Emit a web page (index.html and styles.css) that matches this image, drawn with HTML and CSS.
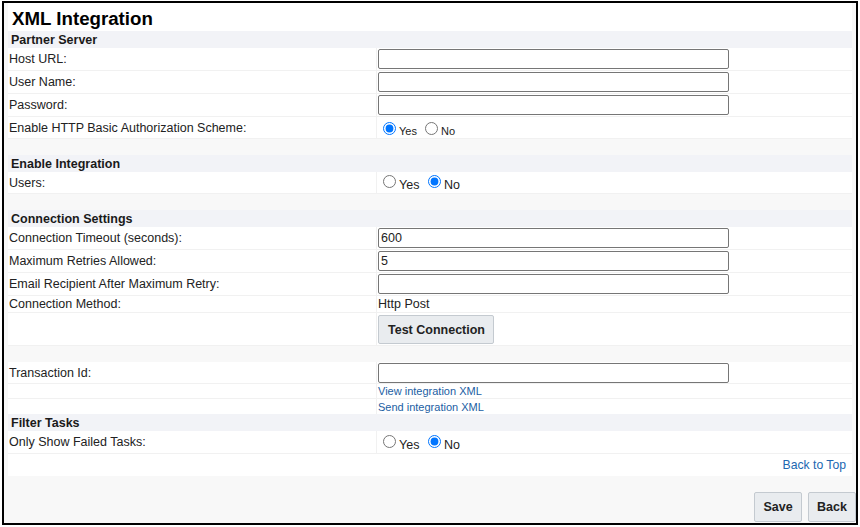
FILE: index.html
```html
<!DOCTYPE html>
<html>
<head>
<meta charset="utf-8">
<title>XML Integration</title>
<link rel="stylesheet" href="styles.css">
</head>
<body>
<div class="frame">
  <div class="content">
    <h1 class="title">XML Integration</h1>

    <div class="head">Partner Server</div>
    <div class="row"><div class="label">Host URL:</div><div class="value"><input class="text" type="text"></div></div>
    <div class="row"><div class="label">User Name:</div><div class="value"><input class="text" type="text"></div></div>
    <div class="row"><div class="label">Password:</div><div class="value"><input class="text" type="password"></div></div>
    <div class="row r22"><div class="label">Enable HTTP Basic Authorization Scheme:</div>
      <div class="value"><span class="radios small"><input type="radio" name="auth" checked><span class="opt">Yes</span> <input type="radio" name="auth"><span class="opt">No</span></span></div></div>

    <div class="gap"></div>

    <div class="head">Enable Integration</div>
    <div class="row r22"><div class="label">Users:</div>
      <div class="value"><span class="radios"><input type="radio" name="users"><span class="opt">Yes</span> <input type="radio" name="users" checked><span class="opt">No</span></span></div></div>

    <div class="gap"></div>

    <div class="head">Connection Settings</div>
    <div class="row"><div class="label">Connection Timeout (seconds):</div><div class="value"><input class="text" type="text" value="600"></div></div>
    <div class="row"><div class="label">Maximum Retries Allowed:</div><div class="value"><input class="text" type="text" value="5"></div></div>
    <div class="row"><div class="label">Email Recipient After Maximum Retry:</div><div class="value"><input class="text" type="text"></div></div>
    <div class="row r17"><div class="label">Connection Method:</div><div class="value">Http Post</div></div>
    <div class="row r33"><div class="label"></div><div class="value top"><button class="btn test">Test Connection</button></div></div>

    <div class="gap"></div>

    <div class="row r22"><div class="label">Transaction Id:</div><div class="value"><input class="text" type="text"></div></div>
    <div class="row r15"><div class="label"></div><div class="value"><a class="link" href="#">View integration XML</a></div></div>
    <div class="row r15 last"><div class="label"></div><div class="value"><a class="link" href="#">Send integration XML</a></div></div>

    <div class="head">Filter Tasks</div>
    <div class="row"><div class="label">Only Show Failed Tasks:</div>
      <div class="value"><span class="radios"><input type="radio" name="failed"><span class="opt">Yes</span> <input type="radio" name="failed" checked><span class="opt">No</span></span></div></div>
    <div class="totop"><a class="link top-link" href="#">Back to Top</a></div>
  </div>
  <div class="actions">
    <button class="btn">Save</button>
    <button class="btn">Back</button>
  </div>
</div>
</body>
</html>
```

FILE: styles.css
```css
html, body {
  margin: 0;
  padding: 0;
  background: #ffffff;
}

body {
  font-family: "Liberation Sans", Arial, sans-serif;
  font-size: 12.5px;
  color: #222222;
}

.frame {
  margin: 1px 2px 0 2px;
  width: 852px;
  height: 520px;
  border: 2px solid #000000;
  background: #f8f8f8;
  display: flex;
  flex-direction: column;
}

.content {
  margin: 0 4px 0 4px;
  display: flex;
  flex-direction: column;
}

.title {
  margin: 0;
  height: 28px;
  box-sizing: border-box;
  padding: 5px 0 0 4px;
  font-size: 18.7px;
  line-height: 22px;
  font-weight: bold;
  color: #000000;
  background: #ffffff;
}

.head {
  height: 17px;
  padding-left: 3px;
  display: flex;
  align-items: center;
  background: #f2f3f7;
  font-weight: bold;
  color: #1a1a1a;
}

.gap {
  height: 16px;
}

.row {
  display: grid;
  grid-template-columns: 369px 1fr;
  height: 23px;
  box-sizing: border-box;
  border-bottom: 1px solid #f1f1f1;
  background: #ffffff;
}

.row.r22 { height: 22px; }
.row.r17 { height: 17px; }
.row.r15 { height: 15px; }
.row.r33 { height: 33px; }
.row.last { border-bottom: none; }

.label {
  padding-left: 1px;
  border-right: 1px solid #f1f1f1;
  display: flex;
  align-items: center;
  white-space: nowrap;
}

.value {
  padding-left: 1px;
  display: flex;
  align-items: center;
  white-space: nowrap;
}

.value.top {
  align-items: flex-start;
  padding-top: 2px;
}

.text {
  width: 351px;
  height: 20px;
  box-sizing: border-box;
  margin: 0;
  border: 1px solid #767676;
  border-radius: 2px;
  padding: 1px 2px;
  font-family: "Liberation Sans", Arial, sans-serif;
  font-size: 12.5px;
  color: #222222;
  background: #ffffff;
}

.radios {
  display: block;
  line-height: 14px;
}

.radios input {
  width: 13px;
  height: 13px;
  margin: 0 3px 0 5px;
  vertical-align: -1px;
  accent-color: #0075ff;
}

.radios .opt {
  position: relative;
  top: 2px;
}

.radios.small {
  font-size: 11px;
}

.radios.small input {
  vertical-align: -3px;
}

.radios.small .opt {
  top: 3px;
}

.link {
  font-size: 11px;
  color: #1b5ea3;
  text-decoration: none;
}

.totop {
  height: 22px;
  background: #ffffff;
  display: flex;
  align-items: center;
  justify-content: flex-end;
  padding-right: 6px;
}

.top-link {
  font-size: 12.2px;
  color: #2167b1;
}

.btn {
  margin: 0;
  height: 29px;
  padding: 0 9px;
  border: 1px solid #c4cad0;
  border-radius: 2px;
  background: #e9ecef;
  font-family: "Liberation Sans", Arial, sans-serif;
  font-size: 12.5px;
  font-weight: bold;
  color: #222222;
}

.btn.test {
  width: 116px;
}

.actions {
  margin-top: 16px;
  display: flex;
  justify-content: flex-end;
  gap: 6px;
}

.actions .btn {
  width: 48px;
  height: 30px;
  padding: 0;
}
```
